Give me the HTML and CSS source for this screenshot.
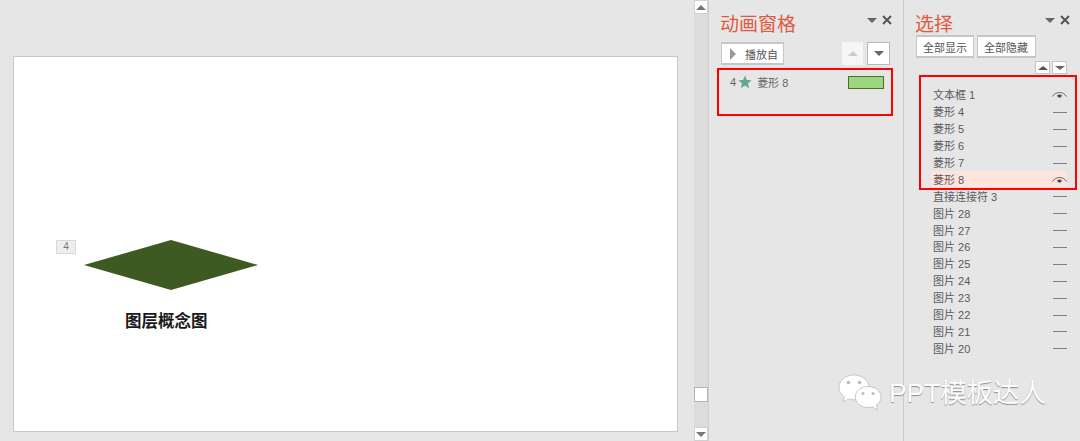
FILE: index.html
```html
<!DOCTYPE html>
<html lang="zh">
<head>
<meta charset="utf-8">
<title>图层概念图</title>
<link rel="stylesheet" href="styles.css">
</head>
<body>
<svg class="defs" width="0" height="0" aria-hidden="true">
  <symbol id="eye" viewBox="0 0 15 8">
    <path d="M0.5 5.500C3.500 .2 11.500 .2 14.500 5.500" fill="none" stroke="#666" stroke-width="1"/>
    <path d="M5.200 4.200C6.500 3.400 8.500 3.400 9.800 4.200C9.800 7.400 5.200 7.400 5.200 4.200z" fill="#4a4a4a"/>
  </symbol>
  <symbol id="x" viewBox="0 0 10 10">
    <path d="M1 1L9 9M9 1L1 9" fill="none" stroke="#555" stroke-width="2"/>
  </symbol>
</svg>
<div class="app">
  <main class="canvas">
    <section class="slide">
      <span class="anim-tag">4</span>
      <svg class="diamond" width="176" height="52" viewBox="0 0 176 52"><polygon points="1,26 88,1 175,26 88,51" fill="#3c5a22"/></svg>
      <p class="caption">图层概念图</p>
    </section>
  </main>
  <div class="scrollbar">
    <button class="scroll-btn"><i class="tri up"></i></button>
    <div class="scroll-track"><div class="scroll-thumb"></div></div>
    <button class="scroll-btn"><i class="tri down"></i></button>
  </div>
  <aside class="pane anim-pane">
    <header class="pane-head">
      <h2>动画窗格</h2>
      <div class="pane-ctl"><i class="tri down dark"></i><svg class="close" width="10" height="10"><use href="#x"/></svg></div>
    </header>
    <div class="anim-tools">
      <button class="btn play"><i class="tri right"></i>播放自</button>
      <div class="order">
        <button class="order-btn off"><i class="tri up light"></i></button>
        <button class="order-btn"><i class="tri down dark"></i></button>
      </div>
    </div>
    <div class="anim-row">
      <span class="num">4</span>
      <svg class="star" width="14" height="14" viewBox="0 0 14 14"><polygon points="7,.5 8.900,5 13.600,5.300 10,8.400 11.200,13.200 7,10.600 2.800,13.200 4,8.400 .4,5.300 5.100,5" fill="#63a88f"/></svg>
      <span class="anim-name">菱形 8</span>
      <span class="bar"></span>
    </div>
  </aside>
  <aside class="pane select-pane">
    <header class="pane-head">
      <h2>选择</h2>
      <div class="pane-ctl"><i class="tri down dark"></i><svg class="close" width="10" height="10"><use href="#x"/></svg></div>
    </header>
    <div class="select-tools">
      <button class="btn">全部显示</button>
      <button class="btn">全部隐藏</button>
    </div>
    <div class="mini-order">
      <button class="mini"><i class="tri up dark small"></i></button>
      <button class="mini"><i class="tri down dark small"></i></button>
    </div>
    <ul class="layers">
      <li><span>文本框 1</span><svg class="eye" width="15" height="8"><use href="#eye"/></svg></li>
      <li><span>菱形 4</span><b class="dash"></b></li>
      <li><span>菱形 5</span><b class="dash"></b></li>
      <li><span>菱形 6</span><b class="dash"></b></li>
      <li><span>菱形 7</span><b class="dash"></b></li>
      <li class="active"><span>菱形 8</span><svg class="eye" width="15" height="8"><use href="#eye"/></svg></li>
      <li><span>直接连接符 3</span><b class="dash"></b></li>
      <li><span>图片 28</span><b class="dash"></b></li>
      <li><span>图片 27</span><b class="dash"></b></li>
      <li><span>图片 26</span><b class="dash"></b></li>
      <li><span>图片 25</span><b class="dash"></b></li>
      <li><span>图片 24</span><b class="dash"></b></li>
      <li><span>图片 23</span><b class="dash"></b></li>
      <li><span>图片 22</span><b class="dash"></b></li>
      <li><span>图片 21</span><b class="dash"></b></li>
      <li><span>图片 20</span><b class="dash"></b></li>
    </ul>
  </aside>
</div>
<div class="redbox red-anim"></div>
<div class="redbox red-select"></div>
<div class="watermark">
  <svg width="44" height="38" viewBox="0 0 44 38">
    <path d="M16 1C7.500 1 1 6.600 1 13.400c0 3.900 2.100 7.200 5.500 9.500L5 28l5.600-3c1.600.5 3.400.8 5.400.8 8.500 0 15-5.600 15-12.400S24.500 1 16 1z" fill="#fff" stroke="#b5b5b5" stroke-width=".7"/>
    <path d="M30 12.500c-7 0-12.700 4.700-12.700 10.500S23 33.500 30 33.500c1.500 0 3-.2 4.300-.7L39.500 36l-1.200-4.900c3-1.900 4.700-4.800 4.700-8.100 0-5.800-6-10.500-13-10.500z" fill="#fff" stroke="#b5b5b5" stroke-width=".7"/>
    <circle cx="10.500" cy="8.500" r="1.800" fill="#bbb"/><circle cx="21.500" cy="8.500" r="1.800" fill="#bbb"/>
    <circle cx="25" cy="19.500" r="1.500" fill="#bbb"/><circle cx="35" cy="19.500" r="1.500" fill="#bbb"/>
  </svg>
  <span>PPT模板达人</span>
</div>
</body>
</html>
```
FILE: styles.css
```css
* { box-sizing: border-box; }
html, body { margin: 0; height: 441px; overflow: hidden; }
body {
  background: #e6e6e6;
  color: #555;
  font-family: "Liberation Sans", "Noto Sans CJK SC", sans-serif;
  font-size: 11px;
  position: relative;
}
.defs { position: absolute; }
.app { display: flex; height: 441px; }
.canvas { width: 694px; padding: 56px 16px 9px 13px; }
.slide {
  position: relative;
  width: 665px;
  height: 376px;
  background: #fff;
  border: 1px solid #c8c8c8;
}
.anim-tag {
  position: absolute;
  left: 42px;
  top: 183px;
  width: 20px;
  height: 14px;
  background: #eeeeee;
  border: 1px solid #d8d8d8;
  font-size: 10px;
  line-height: 12px;
  text-align: center;
  color: #777;
}
.diamond { position: absolute; left: 69px; top: 182px; }
.caption {
  position: absolute;
  left: 111px;
  top: 253px;
  margin: 0;
  font-size: 16.500px;
  line-height: 22px;
  font-weight: 700;
  color: #1a1a1a;
}
.scrollbar {
  width: 15px;
  display: flex;
  flex-direction: column;
  background: #dcdcdc;
  border-right: 1px solid #cfcfcf;
}
.scroll-btn {
  height: 14px;
  width: 14px;
  padding: 0;
  border: 1px solid #d0d0d0;
  background: #fff;
  display: flex;
  align-items: center;
  justify-content: center;
}
.scroll-track { flex: 1; display: flex; align-items: flex-end; padding-bottom: 25px; }
.scroll-thumb { width: 14px; height: 15px; background: #fff; border: 1px solid #b4b4b4; }
.tri { display: block; width: 0; height: 0; border-style: solid; border-color: transparent; }
.tri.up { border-width: 0 5px 5px; border-bottom-color: #777; }
.tri.down { border-width: 5px 5px 0; border-top-color: #777; }
.tri.right { border-width: 6px 0 6px 6px; border-left-color: #999; }
.tri.dark.down { border-top-color: #666; }
.tri.dark.up { border-bottom-color: #555; }
.tri.light.up { border-bottom-color: #ccc; }
.tri.small.up { border-width: 0 5px 4px; }
.tri.small.down { border-width: 4px 5px 0; }
.pane { position: relative; }
.anim-pane { width: 195px; padding: 0 13px 0 11px; border-right: 1px solid #c9c9c9; }
.select-pane { width: 176px; padding: 0 12px 0 11px; }
.pane-head {
  height: 42px;
  display: flex;
  justify-content: space-between;
  align-items: flex-start;
  padding-top: 12px;
}
.pane-head h2 {
  margin: 1px 0 0;
  font-size: 19px;
  line-height: 24px;
  font-weight: 400;
  color: #e2583e;
}
.pane-ctl { display: flex; align-items: center; gap: 5px; height: 14px; margin-top: 1px; margin-right: -2px; }
.btn {
  height: 23px;
  padding: 0 6px;
  background: #fff;
  border: 1px solid #c6c6c6;
  border-width: 2px 1px;
  font: inherit;
  color: #555;
  display: flex;
  align-items: center;
}
.anim-tools { display: flex; justify-content: space-between; padding-left: 1px; }
.play { width: 63px; height: 23px; padding: 0 0 0 8px; gap: 9px; }
.order { display: flex; gap: 4px; }
.order-btn {
  width: 23px;
  height: 23px;
  padding: 0;
  background: #fff;
  border: 1px solid #b9b9b9;
  display: flex;
  align-items: center;
  justify-content: center;
}
.order-btn.off { width: 21px; border-color: #f6f6f6; background: #f6f6f6; }
.anim-row {
  margin-top: 4px;
  height: 26px;
  display: flex;
  align-items: center;
  padding-left: 10px;
  color: #666;
}
.num { margin-right: 2px; }
.star { margin-right: 5px; }
.bar {
  margin-left: auto;
  width: 36px;
  height: 13px;
  margin-right: 6px;
  background: #9cd67d;
  border: 1px solid #4f6b34;
}
.select-tools { display: flex; gap: 3px; margin-top: -7px; padding-left: 1px; }
.select-tools .btn { height: 23px; }
.select-tools .btn:last-child { padding-right: 7px; }
.mini-order { display: flex; justify-content: flex-end; gap: 2px; margin: 3px 1px 0 0; }
.mini {
  width: 15px;
  height: 13px;
  padding: 0;
  background: #fff;
  border: 1px solid #c6c6c6;
  display: flex;
  align-items: center;
  justify-content: center;
}
.layers {
  list-style: none;
  margin: 13px 0 0 16px;
  padding: 0;
  width: 136px;
}
.layers li {
  height: 16.900px;
  display: flex;
  justify-content: space-between;
  align-items: center;
  padding: 0 0 0 2px;
  color: #5a5a5a;
  line-height: 16px;
}
.layers li.active { background: #fde4dc; }
.dash { display: block; width: 14px; height: 1px; background: #808080; }
.redbox { position: absolute; border: 2px solid #f00; pointer-events: none; }
.red-anim { left: 717px; top: 68px; width: 176px; height: 48px; }
.red-select { left: 919px; top: 75px; width: 158px; height: 115px; }
.watermark {
  position: absolute;
  left: 838px;
  top: 373px;
  display: flex;
  align-items: center;
  gap: 7px;
  color: #fff;
  font-size: 26.400px;
  line-height: 40px;
  text-shadow: 0 1px 1px #8c8c8c;
}
```
